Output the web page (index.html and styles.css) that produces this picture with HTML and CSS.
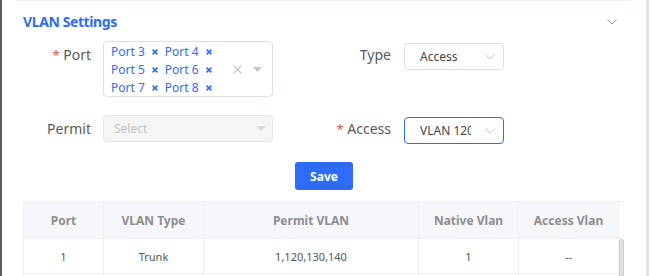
FILE: index.html
```html
<!DOCTYPE html>
<html>
<head>
<meta charset="utf-8">
<link rel="stylesheet" href="styles.css">
</head>
<body>
<div class="page">
  <div class="edge-left"></div>
  <main class="main">
    <div class="topline"></div>
    <section class="card">
      <header class="card-head">
        <h2 class="title">VLAN Settings</h2>
        <svg class="collapse" width="10" height="6" viewBox="0 0 10 6"><polyline points="0.5,0.5 5,5 9.5,0.5" fill="none" stroke="#9a9a9a" stroke-width="1"/></svg>
      </header>

      <div class="form">
        <div class="lbl"><span class="req">*</span> Port</div>
        <div class="multi">
          <div class="tags">
            <span class="tag">Port 3<svg class="tx" width="6" height="6" viewBox="0 0 6 6"><path d="M0.6 0.6L5.4 5.4M5.4 0.6L0.6 5.4" stroke="#2d6cf9" stroke-width="1.6"/></svg></span>
            <span class="tag">Port 4<svg class="tx" width="6" height="6" viewBox="0 0 6 6"><path d="M0.6 0.6L5.4 5.4M5.4 0.6L0.6 5.4" stroke="#2d6cf9" stroke-width="1.6"/></svg></span>
            <span class="tag">Port 5<svg class="tx" width="6" height="6" viewBox="0 0 6 6"><path d="M0.6 0.6L5.4 5.4M5.4 0.6L0.6 5.4" stroke="#2d6cf9" stroke-width="1.6"/></svg></span>
            <span class="tag">Port 6<svg class="tx" width="6" height="6" viewBox="0 0 6 6"><path d="M0.6 0.6L5.4 5.4M5.4 0.6L0.6 5.4" stroke="#2d6cf9" stroke-width="1.6"/></svg></span>
            <span class="tag">Port 7<svg class="tx" width="6" height="6" viewBox="0 0 6 6"><path d="M0.6 0.6L5.4 5.4M5.4 0.6L0.6 5.4" stroke="#2d6cf9" stroke-width="1.6"/></svg></span>
            <span class="tag">Port 8<svg class="tx" width="6" height="6" viewBox="0 0 6 6"><path d="M0.6 0.6L5.4 5.4M5.4 0.6L0.6 5.4" stroke="#2d6cf9" stroke-width="1.6"/></svg></span>
          </div>
          <div class="suffix">
            <svg width="9" height="9" viewBox="0 0 9 9"><path d="M0.5 0.5L8.5 8.5M8.5 0.5L0.5 8.5" stroke="#c8c8c8" stroke-width="1.2"/></svg>
            <svg width="9" height="5" viewBox="0 0 9 5"><polygon points="0,0 9,0 4.5,5" fill="#c0c4cc"/></svg>
          </div>
        </div>

        <div class="lbl">Type</div>
        <div class="select shifted">
          <span class="val">Access</span>
          <svg width="10" height="6" viewBox="0 0 10 6"><polyline points="0.5,0.5 5,5 9.5,0.5" fill="none" stroke="#c6c9cf" stroke-width="1"/></svg>
        </div>

        <div class="lbl">Permit</div>
        <div class="select disabled wide">
          <span class="ph">Select</span>
          <svg width="10" height="5" viewBox="0 0 10 5"><polygon points="0,0 10,0 5,5" fill="#d6d8dc"/></svg>
        </div>

        <div class="lbl"><span class="req">*</span> Access</div>
        <div class="select shifted focus">
          <span class="val clip">VLAN 120</span>
          <svg width="10" height="6" viewBox="0 0 10 6"><polyline points="0.5,0.5 5,5 9.5,0.5" fill="none" stroke="#c6c9cf" stroke-width="1"/></svg>
        </div>
      </div>

      <div class="actions"><button class="btn">Save</button></div>

      <div class="table-wrap">
        <table class="grid">
          <colgroup>
            <col class="c1"><col class="c2"><col class="c3"><col class="c4"><col class="c5"><col class="c6">
          </colgroup>
          <thead>
            <tr><th>Port</th><th>VLAN Type</th><th>Permit VLAN</th><th>Native Vlan</th><th>Access Vlan</th><th class="gutter"></th></tr>
          </thead>
          <tbody>
            <tr><td>1</td><td>Trunk</td><td>1,120,130,140</td><td>1</td><td>--</td><td class="gutter" rowspan="2"><div class="thumb"></div></td></tr>
            <tr><td></td><td></td><td></td><td></td><td></td></tr>
          </tbody>
        </table>
      </div>
    </section>
  </main>
  <div class="edge-right"></div>
</div>
</body>
</html>
```

FILE: styles.css
```css
* { box-sizing: border-box; }
html, body { margin: 0; padding: 0; background: #fff; }
body {
  width: 651px;
  height: 276px;
  overflow: hidden;
  font-family: "Noto Sans", "Open Sans", sans-serif;
  color: #555;
}
.page { display: flex; height: 276px; overflow: hidden; }
.edge-left { width: 2px; background: #5e5e5e; flex: none; }
.main { width: 644px; flex: none; }
.edge-right { width: 3px; background: #e3e3e3; margin-right: 2px; flex: none; }

.topline { height: 1px; margin: 0 15px; background: #edf1f9; }

.card { padding: 0 22px 0 21px; }
.card-head {
  display: flex;
  align-items: center;
  justify-content: space-between;
  padding-top: 11px;
  height: 31px;
}
.title {
  margin: 0;
  font-size: 14px;
  line-height: 20px;
  font-weight: 700;
  color: #2d6cf9;
  letter-spacing: -0.4px;
}
.collapse { margin-right: 7px; }

.form {
  margin-top: 9px;
  display: grid;
  grid-template-columns: 80px 170px 131px 100px;
  row-gap: 18px;
  align-items: start;
}
.lbl {
  font-size: 14px;
  line-height: 28px;
  text-align: right;
  padding-right: 12px;
  color: #5a5a5a;
}
.form .lbl:nth-child(3), .form .lbl:nth-child(7) { padding-right: 13px; }
.req { color: #f0504a; font-size: 13px; }

.multi {
  display: flex;
  align-items: center;
  height: 56px;
  border: 1px solid #dcdfe6;
  border-radius: 4px;
  padding: 1px 10px 0 7px;
}
.tags {
  flex: 1;
  display: flex;
  flex-wrap: wrap;
  align-self: flex-start;
}
.tag {
  display: inline-flex;
  align-items: center;
  font-size: 12px;
  line-height: 18px;
  color: #2d6cf9;
  margin-right: 7px;
}
.tx { margin-left: 7px; }
.suffix { display: flex; align-items: center; gap: 11px; }

.select {
  display: flex;
  align-items: center;
  justify-content: space-between;
  height: 27px;
  border: 1px solid #dcdfe6;
  border-radius: 4px;
  padding: 0 8px 0 15px;
  font-size: 12px;
  color: #444;
}
.shifted { margin-top: 2px; }
.focus { border-color: #2d6cf9; }
.disabled { background: #f5f5f5; border-color: #e4e6ea; padding: 0 6px 0 10px; }
.ph { color: #c3c3c3; }
.val.clip { width: 51px; overflow: hidden; white-space: nowrap; }

.actions { display: flex; justify-content: center; margin-top: 18px; padding-left: 1px; }
.btn {
  width: 58px;
  height: 28px;
  border: none;
  border-radius: 3px;
  background: #2d6cf9;
  color: #fff;
  font-family: inherit;
  font-size: 12px;
  font-weight: 700;
  padding: 0;
}

.table-wrap { margin-top: 11px; height: 75px; overflow: hidden; }
.grid {
  width: 601px;
  border-collapse: collapse;
  table-layout: fixed;
}
.c1 { width: 80px; } .c2 { width: 100px; } .c3 { width: 215px; }
.c4 { width: 100px; } .c5 { width: 100px; } .c6 { width: 6px; }
.grid th, .grid td {
  border: 1px solid #eef0f5;
  text-align: center;
  padding: 0;
}
.grid th {
  height: 37px;
  background: #f5f7fa;
  font-size: 12px;
  font-weight: 700;
  color: #8e8e8e;
}
.grid td {
  height: 35px;
  font-size: 11px;
  color: #555;
}
.grid th.gutter { background: #fff; }
.grid td.gutter { vertical-align: top; position: relative; }
.thumb {
  position: absolute;
  left: 0;
  right: 0;
  top: 0;
  bottom: 0;
  background: #dedede;
  border: 1px solid #cfcfcf;
  border-radius: 3px 3px 0 0;
}
```
